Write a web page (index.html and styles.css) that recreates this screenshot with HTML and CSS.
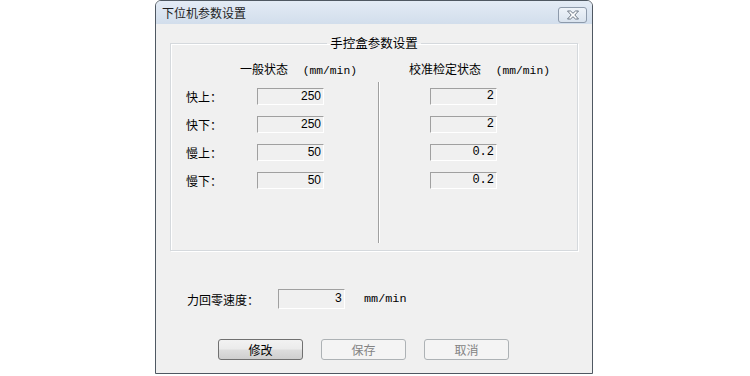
FILE: index.html
```html
<!DOCTYPE html>
<html lang="zh-CN">
<head>
  <meta charset="UTF-8" />
  <title>下位机参数设置</title>
  <link rel="stylesheet" href="styles.css">
</head>
<body>
  <div class="window">
    <div class="titlebar">
      <span class="title">下位机参数设置</span>
      <span class="close">
        <svg width="14" height="10" viewBox="0 0 14 10">
          <path d="M1.5 1 L4.5 1 L7 3.3 L9.5 1 L12.5 1 L8.8 5 L12.5 9 L9.5 9 L7 6.7 L4.5 9 L1.5 9 L5.2 5 Z" fill="#fff" stroke="#6b7684" stroke-width="1" stroke-linejoin="round"/>
        </svg>
      </span>
    </div>

    <div class="content">
      <fieldset class="group">
        <legend>手控盒参数设置</legend>
        <div class="cols">
          <div class="head head-left">一般状态 <span class="unit">(mm/min)</span></div>
          <div class="head head-right">校准检定状态 <span class="unit">(mm/min)</span></div>

          <div class="col col-left">
            <div class="row"><label>快上：</label><input class="field sans" value="250" readonly></div>
            <div class="row"><label>快下：</label><input class="field sans" value="250" readonly></div>
            <div class="row"><label>慢上：</label><input class="field sans" value="50" readonly></div>
            <div class="row"><label>慢下：</label><input class="field sans" value="50" readonly></div>
          </div>
          <div class="divider"></div>
          <div class="col col-right">
            <div class="row"><input class="field mono" value="2" readonly></div>
            <div class="row"><input class="field mono" value="2" readonly></div>
            <div class="row"><input class="field mono" value="0.2" readonly></div>
            <div class="row"><input class="field mono" value="0.2" readonly></div>
          </div>
        </div>
      </fieldset>

      <div class="force-row">
        <label>力回零速度：</label>
        <input class="field mono force" value="3" readonly>
        <span class="unit force-unit">mm/min</span>
      </div>

      <div class="buttons">
        <button class="btn">修改</button>
        <button class="btn" disabled>保存</button>
        <button class="btn" disabled>取消</button>
      </div>
    </div>
  </div>
</body>
</html>
```

FILE: styles.css
```css
body {
  margin: 0;
  background: #fff;
  font-family: "Noto Sans CJK SC", "Liberation Sans", sans-serif;
  font-size: 12px;
  color: #000;
}
.window {
  width: 438px;
  height: 374px;
  margin-left: 155px;
  box-sizing: border-box;
  border: 1px solid #4f5862;
  border-radius: 6px 6px 0 0;
  background: #f0f0f0;
}
.titlebar {
  height: 23px;
  display: flex;
  align-items: center;
  justify-content: space-between;
  padding: 0 5px 0 6px;
  background: linear-gradient(#e3ebf5, #d2deec);
  border-radius: 5px 5px 0 0;
}
.title {
  color: #1e1e1e;
  line-height: 16px;
}
.close {
  width: 27px;
  height: 14px;
  display: flex;
  align-items: center;
  justify-content: center;
  border: 1px solid #8d9aab;
  border-radius: 3px;
  background: linear-gradient(#eef3f9, #d9e3ee);
  margin-top: 4px;
}
.content {
  padding: 11px 14px 0 14px;
}
.group {
  margin: 0;
  padding: 0 0 7px 0;
  min-width: 0;
  border: 1px solid #d5d9dd;
  box-shadow: inset 1px 1px #fff, 1px 1px #fff;
}
.group legend {
  margin: 0 auto;
  padding: 0 3px;
  line-height: 16px;
  font-size: 12.5px;
}
.cols {
  display: grid;
  grid-template-columns: 207px 2px 1fr;
  grid-template-rows: 16px 161px;
  row-gap: 5px;
  margin-top: 10px;
}
.head {
  line-height: 16px;
  white-space: nowrap;
}
.head-left {
  grid-column: 1 / 2;
  padding-left: 69px;
}
.head-right {
  grid-column: 3 / 4;
  padding-left: 29px;
}
.unit {
  font-family: "Liberation Mono", monospace;
  font-size: 11.3px;
  margin-left: 12px;
}
.col-left {
  padding-left: 15px;
}
.col-right {
  padding-left: 50px;
}
.divider {
  border-left: 1px solid #a0a0a0;
  border-right: 1px solid #fff;
}
.row {
  height: 28px;
  display: flex;
  align-items: center;
}
.row label {
  width: 71px;
}
.field {
  width: 67px;
  height: 17px;
  box-sizing: border-box;
  margin: 0;
  padding: 0 2px 0 0;
  border-style: solid;
  border-width: 1px;
  border-color: #a0a0a0 #fff #fff #a0a0a0;
  background: #f0f0f0;
  text-align: right;
  color: #000;
  outline: none;
}
.sans {
  font-family: "Liberation Sans", sans-serif;
  font-size: 12px;
}
.mono {
  font-family: "Liberation Mono", monospace;
  font-size: 12px;
}
.force-row {
  display: flex;
  align-items: center;
  height: 20px;
  margin-top: 38px;
  padding-left: 17px;
}
.force-row label {
  width: 91px;
}
.force {
  height: 20px;
}
.force-unit {
  font-size: 11.8px;
  margin-left: 19px;
}
.buttons {
  display: flex;
  gap: 18px;
  margin-top: 30px;
  padding-left: 48px;
}
.btn {
  width: 85px;
  height: 21px;
  padding: 0;
  font-family: "Noto Sans CJK SC", sans-serif;
  font-size: 12px;
  color: #000;
  border: 1px solid #707070;
  border-radius: 3px;
  background: linear-gradient(#f2f2f2 0%, #ebebeb 48%, #dddddd 52%, #cfcfcf 100%);
}
.btn:disabled {
  border-color: #adb2b5;
  background: #f4f4f4;
  color: #838383;
}
```
